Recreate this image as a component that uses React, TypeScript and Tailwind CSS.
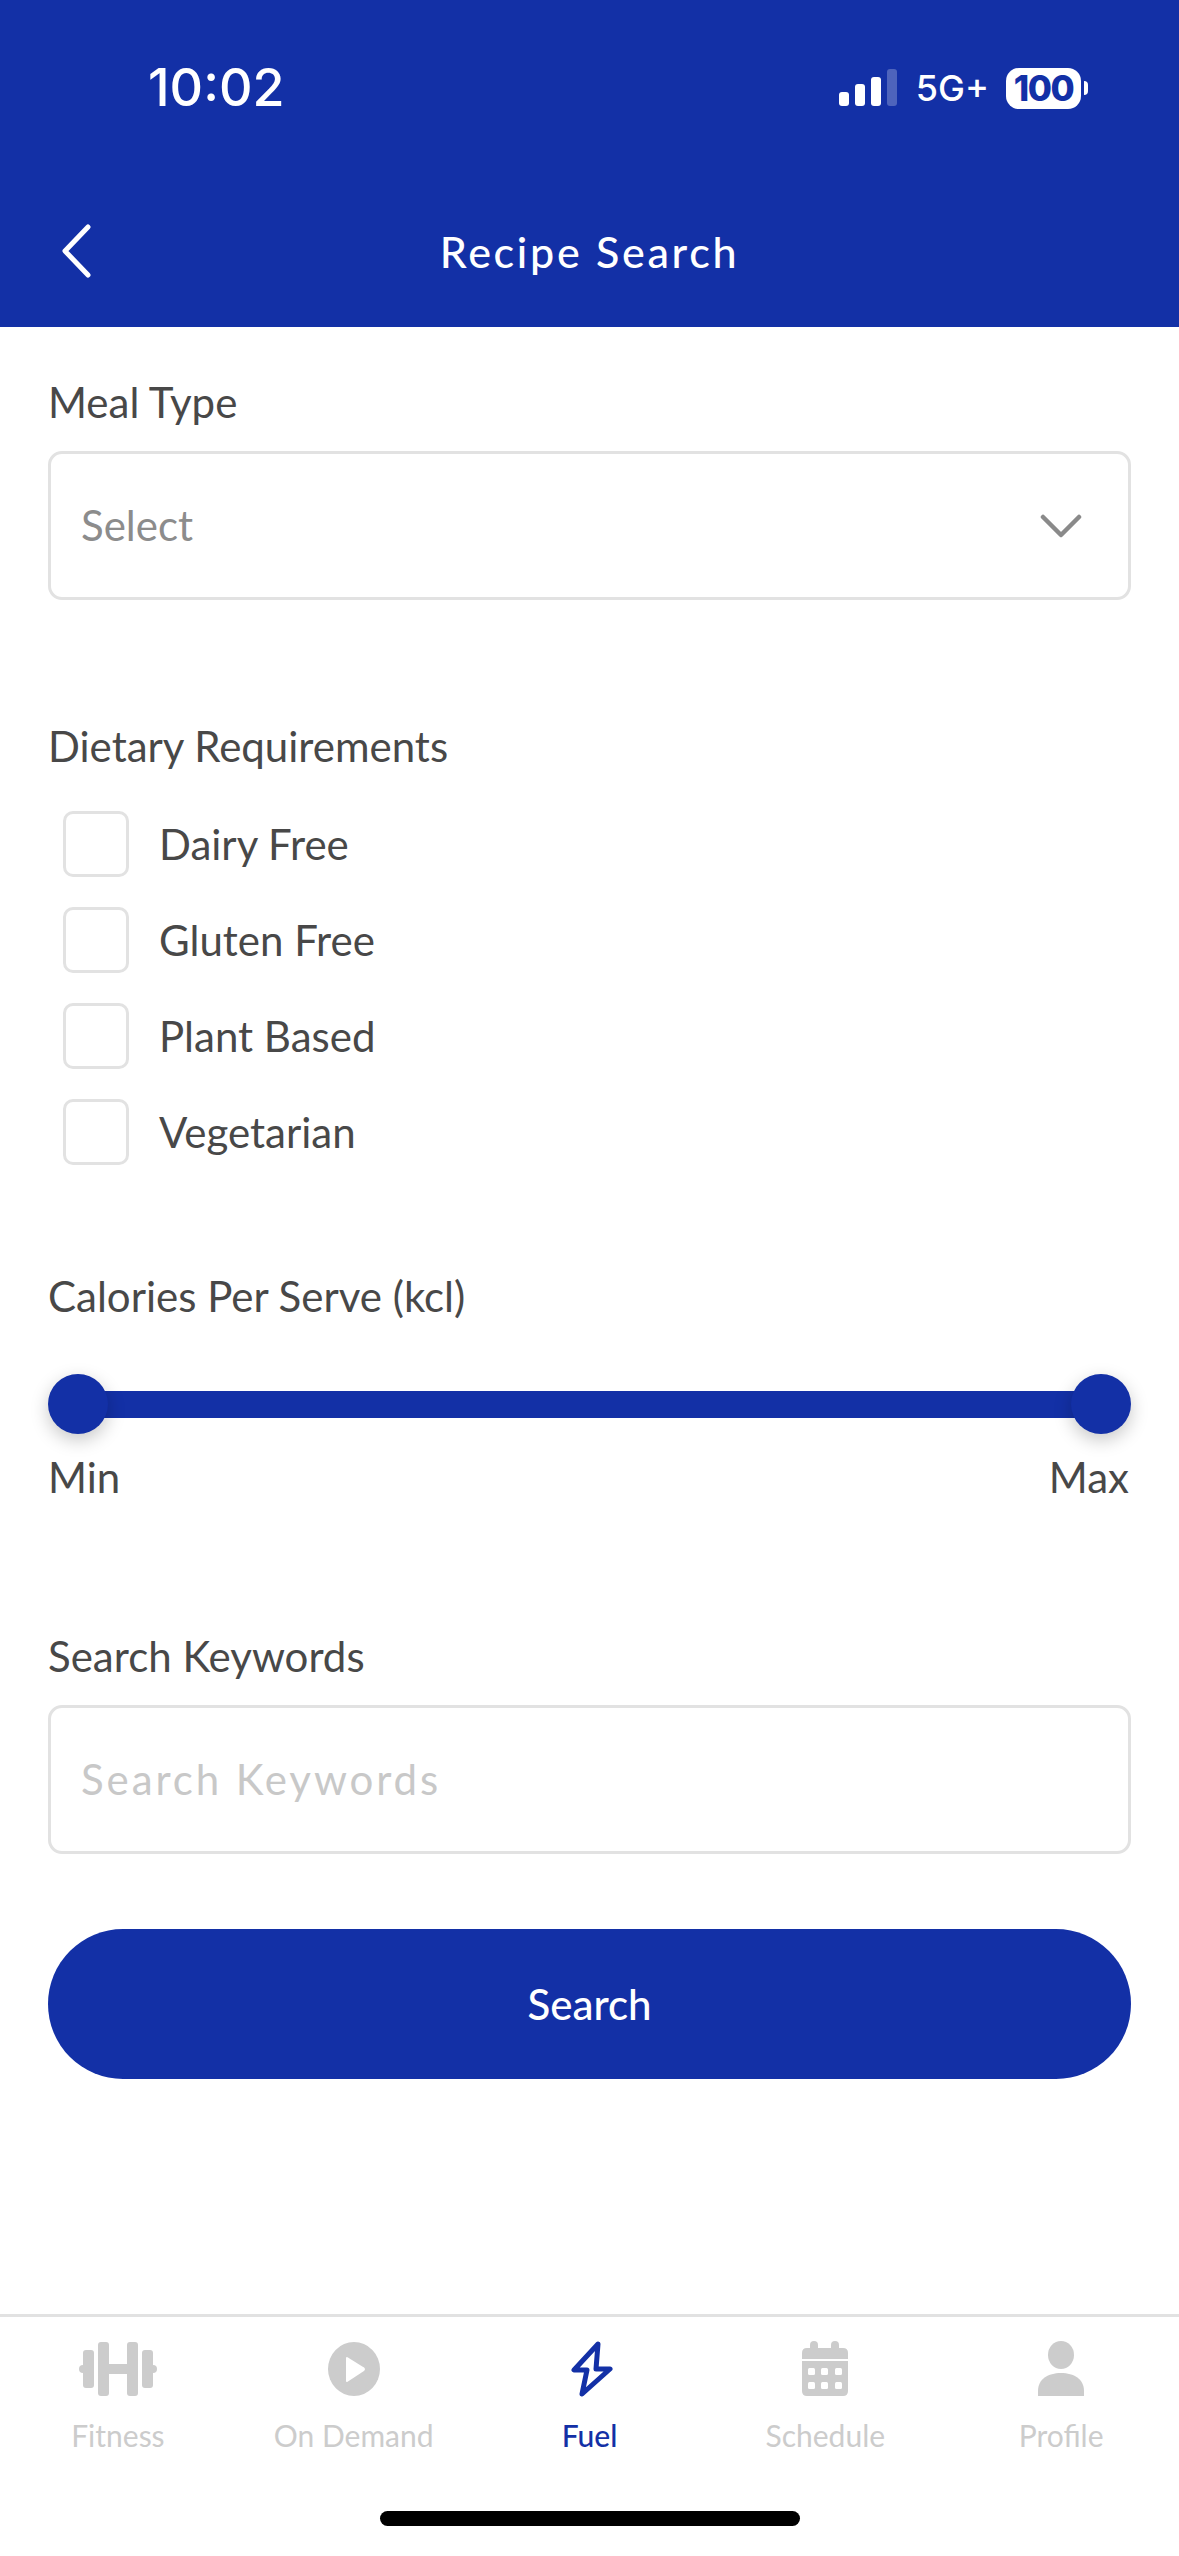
function Label({ children }: { children: string }) {
  return <div className="text-[42px] leading-[50px] text-[#484848]">{children}</div>;
}

function Check({ label }: { label: string }) {
  return (
    <div className="flex items-center h-[66px] pl-[15px]">
      <div className="w-[66px] h-[66px] rounded-[10px] border-[3px] border-[#e2e2e2] bg-white" />
      <span className="ml-[30px] text-[42px] leading-[50px] text-[#484848]">{label}</span>
    </div>
  );
}

function Tab({ label, active, children }: { label: string; active?: boolean; children: React.ReactNode }) {
  return (
    <div className="flex-1 flex flex-col items-center">
      <div className="h-[56px] flex items-center justify-center">{children}</div>
      <div className={`mt-[18px] text-[30px] leading-[40px] ${active ? "text-[#1330a6] font-medium" : "text-[#cccccc]"}`}>{label}</div>
    </div>
  );
}

export default function App() {
  return (
    <div className="w-[1179px] h-[2556px] bg-white flex flex-col overflow-hidden font-['Lato',sans-serif]">
      <header className="h-[327px] bg-[#1330a6] text-white relative shrink-0">
        <div className="flex items-center justify-between h-[88px] pt-[44px] box-content pl-[148px] pr-[91px]">
          <span className="text-[52px] leading-[60px] font-medium font-['Inter',sans-serif]">10:02</span>
          <div className="flex items-center">
            <svg width="60" height="38" viewBox="0 0 60 38" className="mr-[18px]">
              <rect x="1" y="23" width="10" height="14" rx="3" fill="#fff" />
              <rect x="17" y="15" width="10" height="22" rx="3" fill="#fff" />
              <rect x="33" y="8" width="10" height="29" rx="3" fill="#fff" />
              <rect x="49" y="0" width="10" height="37" rx="3" fill="#fff" fillOpacity="0.25" />
            </svg>
            <span className="text-[36px] leading-[40px] font-medium font-['Inter',sans-serif] mr-[17px]">5G+</span>
            <div className="w-[75px] h-[41px] bg-white rounded-[13px] flex items-center justify-center text-[#1330a6] text-[35px] leading-[40px] font-extrabold font-['Inter',sans-serif] tracking-[-1.5px]">100</div>
            <div className="w-[4px] h-[14px] ml-[3px] bg-white rounded-r-[4px]" />
          </div>
        </div>
        <div className="absolute left-0 right-0 top-[222px] h-[60px] flex items-center justify-center text-[43px] tracking-[2.7px] font-medium">
          Recipe Search
        </div>
        <svg className="absolute left-[60px] top-[224px]" width="32" height="54" viewBox="0 0 32 54" fill="none">
          <path d="M28 3 L5 27 L28 51" stroke="#fff" strokeWidth="5" strokeLinecap="round" strokeLinejoin="round" />
        </svg>
      </header>

      <main className="flex-1 flex flex-col px-[48px] pt-[50px]">
        <Label>Meal Type</Label>
        <div className="mt-[24px] h-[149px] rounded-[14px] border-[3px] border-[#e2e2e2] flex items-center justify-between pl-[30px] pr-[46px]">
          <span className="text-[42px] text-[#8c8c8c]">Select</span>
          <svg width="42" height="24" viewBox="0 0 42 24" fill="none">
            <path d="M3 3 L21 21 L39 3" stroke="#8a8a8a" strokeWidth="4.5" strokeLinecap="round" strokeLinejoin="round" />
          </svg>
        </div>

        <div className="mt-[121px]"><Label>Dietary Requirements</Label></div>
        <div className="mt-[40px] flex flex-col gap-[30px]">
          <Check label="Dairy Free" />
          <Check label="Gluten Free" />
          <Check label="Plant Based" />
          <Check label="Vegetarian" />
        </div>

        <div className="mt-[106px]"><Label>Calories Per Serve (kcl)</Label></div>
        <div className="mt-[53px] relative h-[60px] flex items-center">
          <div className="w-full h-[27px] bg-[#1330a6] mx-[30px]" />
          <div className="absolute left-0 top-0 w-[60px] h-[60px] rounded-full bg-[#1330a6] shadow-[0_6px_18px_rgba(0,0,0,0.22)]" />
          <div className="absolute right-0 top-0 w-[60px] h-[60px] rounded-full bg-[#1330a6] shadow-[0_6px_18px_rgba(0,0,0,0.22)]" />
        </div>
        <div className="mt-[18px] flex justify-between pr-[2px] text-[42px] leading-[50px] text-[#484848]">
          <span>Min</span>
          <span>Max</span>
        </div>

        <div className="mt-[129px]"><Label>Search Keywords</Label></div>
        <div className="mt-[24px] h-[149px] rounded-[14px] border-[3px] border-[#e2e2e2] flex items-center pl-[30px]">
          <span className="text-[42px] tracking-[2.9px] text-[#c8c8c8]">Search Keywords</span>
        </div>
        <div className="mt-[75px] h-[150px] rounded-full bg-[#1330a6] flex items-center justify-center text-white text-[42px] font-medium">
          Search
        </div>
      </main>

      <nav className="h-[242px] shrink-0 border-t-[3px] border-[#e2e2e2] flex flex-col">
        <div className="flex px-0 pt-[24px]">
          <Tab label="Fitness">
            <svg width="78" height="56" viewBox="0 0 78 56" fill="#cccccc">
              <rect x="0" y="24" width="78" height="8" rx="4" />
              <rect x="4" y="9" width="11" height="38" rx="3" />
              <rect x="19" y="1" width="11" height="54" rx="3" />
              <rect x="25" y="23" width="28" height="10" />
              <rect x="46" y="1" width="11" height="54" rx="3" transform="translate(2 0)" />
              <rect x="63" y="9" width="11" height="38" rx="3" />
              <rect x="15" y="24" width="4" height="8" fill="#ffffff" />
              <rect x="59" y="24" width="4" height="8" fill="#ffffff" />
            </svg>
          </Tab>
          <Tab label="On Demand">
            <svg width="54" height="56" viewBox="0 0 54 56">
              <ellipse cx="27" cy="28" rx="26" ry="27" fill="#cccccc" />
              <path d="M20 17 L36 27 Q38 28 36 29.5 L20 40 Z" fill="#ffffff" stroke="#ffffff" strokeWidth="2" strokeLinejoin="round" />
            </svg>
          </Tab>
          <Tab label="Fuel" active>
            <svg width="42" height="56" viewBox="0 0 42 56" fill="none" className="translate-x-[3px]">
              <path d="M27 3 L3 29 L16 29 L11 53 L39 28 L25 28 Z" stroke="#1330a6" strokeWidth="5" strokeLinejoin="round" strokeLinecap="round" />
            </svg>
          </Tab>
          <Tab label="Schedule">
            <svg width="48" height="56" viewBox="0 0 48 56" fill="#cccccc">
              <rect x="9" y="0" width="8" height="14" rx="4" />
              <rect x="30" y="0" width="8" height="14" rx="4" />
              <path d="M6 7 H42 Q47 7 47 12 V18 H1 V12 Q1 7 6 7 Z" />
              <path d="M1 20 H47 V50 Q47 55 42 55 H6 Q1 55 1 50 Z" />
              <g fill="#ffffff">
                <rect x="7" y="27" width="7" height="7" rx="1.5" />
                <rect x="20" y="27" width="7" height="7" rx="1.5" />
                <rect x="34" y="27" width="7" height="7" rx="1.5" />
                <rect x="7" y="41" width="7" height="7" rx="1.5" />
                <rect x="20" y="41" width="7" height="7" rx="1.5" />
                <rect x="34" y="41" width="7" height="7" rx="1.5" />
              </g>
            </svg>
          </Tab>
          <Tab label="Profile">
            <svg width="46" height="56" viewBox="0 0 46 56" fill="#cccccc">
              <ellipse cx="23" cy="14" rx="13" ry="14" />
              <path d="M0 55 V50 C0 38 10 32 23 32 C36 32 46 38 46 50 V55 Z" />
            </svg>
          </Tab>
        </div>
        <div className="mt-[56px] mx-auto w-[420px] h-[15px] rounded-full bg-black" />
      </nav>
    </div>
  );
}
